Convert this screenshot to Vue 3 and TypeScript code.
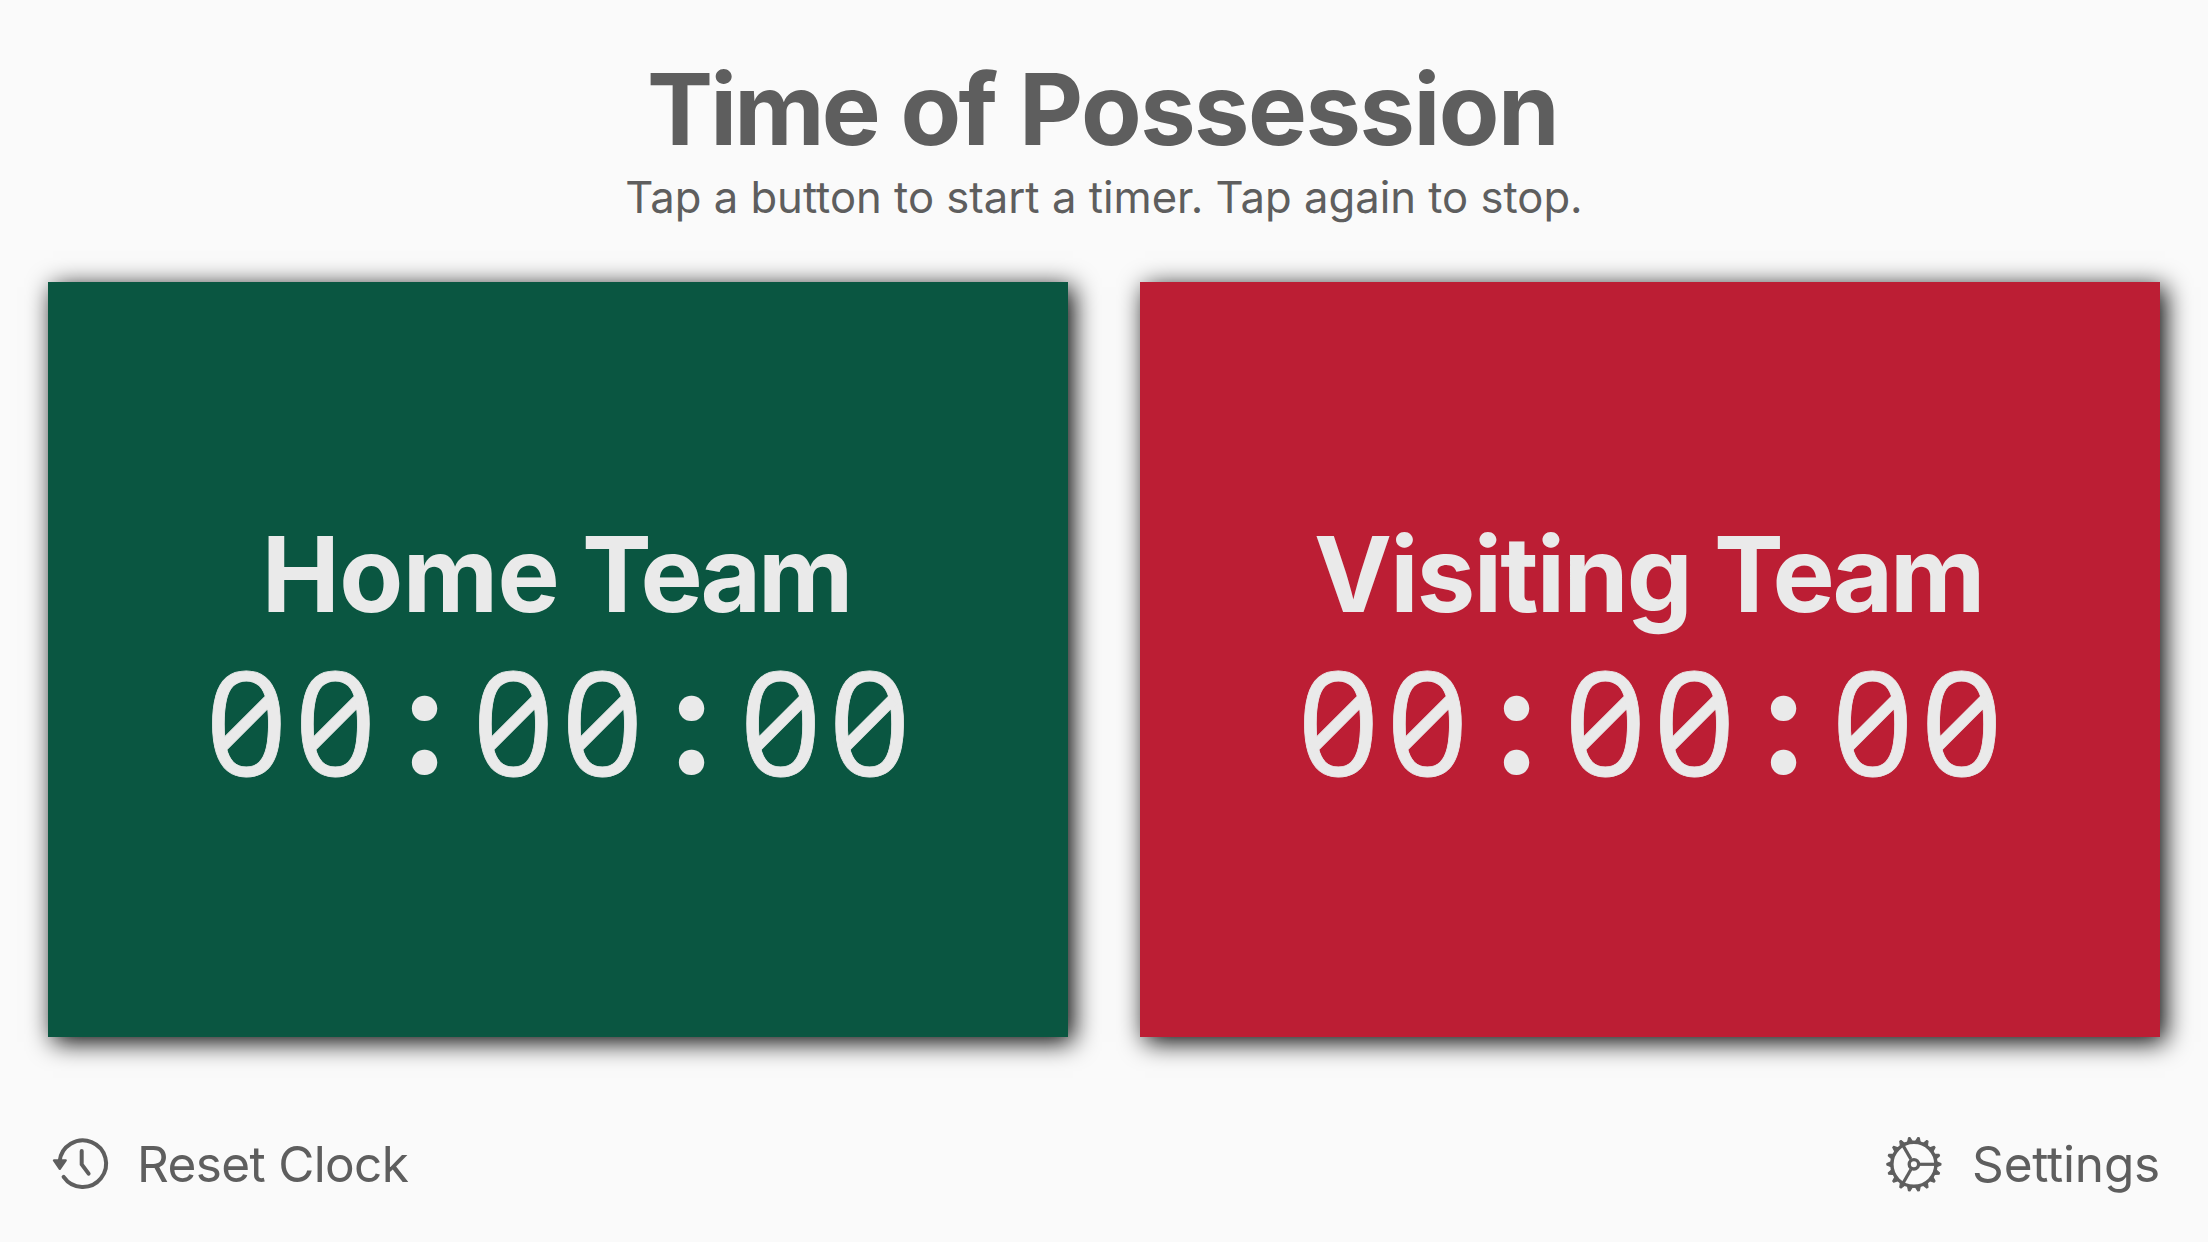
<script setup lang="ts">
import { ref, computed, onBeforeUnmount } from 'vue'

interface Team {
  id: 'home' | 'visiting'
  place: string
  seconds: number
}

const teams = ref<Team[]>([
  { id: 'home', place: 'Home', seconds: 0 },
  { id: 'visiting', place: 'Visiting', seconds: 0 },
])
const active = ref<Team['id'] | null>(null)

const pad = (n: number) => String(n).padStart(2, '0')
const clocks = computed(() =>
  teams.value.map((t) =>
    [Math.floor(t.seconds / 3600), Math.floor(t.seconds / 60) % 60, t.seconds % 60]
      .map(pad)
      .join(':')
      .split(''),
  ),
)

const ticker = setInterval(() => {
  const team = teams.value.find((t) => t.id === active.value)
  if (team) team.seconds++
}, 1000)
onBeforeUnmount(() => clearInterval(ticker))

function toggle(id: Team['id']) {
  active.value = active.value === id ? null : id
}

function reset() {
  active.value = null
  teams.value.forEach((t) => (t.seconds = 0))
}

const teeth = Array.from({ length: 18 }, (_, i) => i * 20)
</script>

<template>
  <main class="screen">
    <header class="header">
      <h1 class="title"><span class="tight">Time of</span> Possession</h1>
      <p class="subtitle">Tap a button to start a timer. Tap again to stop.</p>
    </header>

    <section class="teams">
      <button
        v-for="(team, i) in teams"
        :key="team.id"
        class="card"
        :class="team.id"
        @click="toggle(team.id)"
      >
        <span class="name"><span class="place">{{ team.place }}</span> <span class="noun">Team</span></span>
        <span class="clock">
          <span
            v-for="(ch, j) in clocks[i]"
            :key="j"
            class="cell"
            :class="{ colon: ch === ':' }"
          >{{ ch }}</span>
        </span>
      </button>
    </section>

    <footer class="footer">
      <button class="action reset" @click="reset">
        <svg class="icon" viewBox="0 0 64 64" aria-hidden="true">
          <g fill="none" stroke="currentColor" stroke-width="4" stroke-linecap="round" stroke-linejoin="round">
            <path d="M11.6 29.5A23.3 23.3 0 1 1 15.6 44.9" />
            <path d="M33.7 19V32.4L40.6 41.6" />
          </g>
          <path
            d="M6 28.4H17.7L11.8 36.8Z"
            fill="currentColor"
            stroke="currentColor"
            stroke-width="2.4"
            stroke-linejoin="round"
          />
        </svg>
        <span>Reset Clock</span>
      </button>
      <button class="action settings">
        <svg class="icon" viewBox="0 0 64 64" aria-hidden="true">
          <g transform="translate(31.9 32.3)" fill="none" stroke="currentColor">
            <circle r="22" stroke-width="3.4" />
            <circle r="4.7" stroke-width="3.3" />
            <path
              v-for="a in [0, 120, 240]"
              :key="a"
              d="M6 0H21"
              stroke-width="3.2"
              :transform="`rotate(${a})`"
            />
            <path
              v-for="a in teeth"
              :key="`t${a}`"
              d="M22.8 -2.4L27 -0.7V0.7L22.8 2.4Z"
              fill="currentColor"
              stroke-width="1.2"
              stroke-linejoin="round"
              :transform="`rotate(${a})`"
            />
          </g>
        </svg>
        <span>Settings</span>
      </button>
    </footer>
  </main>
</template>

<style>
body {
  background: #fafafa;
}
</style>

<style scoped>
.screen {
  box-sizing: border-box;
  display: flex;
  flex-direction: column;
  height: 1242px;
  padding: 49px 48px 48px;
  background: #fafafa;
  color: #5e5e5e;
  font-family: Inter, "Liberation Sans", sans-serif;
}
.header {
  text-align: center;
}
.title {
  margin: 0;
  padding-right: 3px;
  font-size: 99px;
  font-weight: 700;
  line-height: 120px;
  letter-spacing: -1.5px;
  word-spacing: 2px;
}
.tight {
  letter-spacing: -2.8px;
}
.subtitle {
  margin: 3px 0 0;
  font-size: 43.6px;
  line-height: 52px;
}
button {
  margin: 0;
  padding: 0;
  border: 0;
  background: none;
  color: inherit;
  font: inherit;
}
.teams {
  display: grid;
  grid-template-columns: 1fr 1fr;
  gap: 72px;
  height: 755px;
  margin-top: 58px;
}
.card {
  display: flex;
  flex-direction: column;
  align-items: center;
  justify-content: center;
  color: #eaeaea;
  box-shadow: 5px 5px 24px #000;
}
.home {
  background: #0a5641;
}
.visiting {
  background: #bc1e34;
}
.name {
  padding-right: 4px;
  font-size: 104.5px;
  font-weight: 700;
  line-height: 126px;
  letter-spacing: -1.9px;
}
.place {
  letter-spacing: -0.6px;
}
.visiting .place {
  letter-spacing: -1.7px;
}
.noun {
  letter-spacing: -3.2px;
}
.clock {
  display: flex;
  align-items: baseline;
  height: 165px;
  margin-bottom: 6px;
  font-family: "Open Sans", "Noto Sans", sans-serif;
  font-size: 144px;
  line-height: 167px;
  font-feature-settings: "zero", "tnum";
  -webkit-text-stroke: 0.8px currentColor;
}
.cell {
  width: 89.05px;
  text-align: center;
}
.colon {
  font-family: Inter, sans-serif;
  font-size: 150px;
  font-weight: 650;
  line-height: 1;
  font-feature-settings: normal;
  -webkit-text-stroke: 0;
  transform: translateY(-2px);
}
.footer {
  display: flex;
  justify-content: space-between;
  margin-top: 97px;
}
.action {
  display: flex;
  align-items: center;
  gap: 25px;
  height: 60px;
  font-size: 49.5px;
  line-height: 60px;
  letter-spacing: -0.65px;
}
.settings {
  gap: 26px;
  letter-spacing: -0.2px;
}
.icon {
  width: 64px;
  height: 64px;
}
</style>
